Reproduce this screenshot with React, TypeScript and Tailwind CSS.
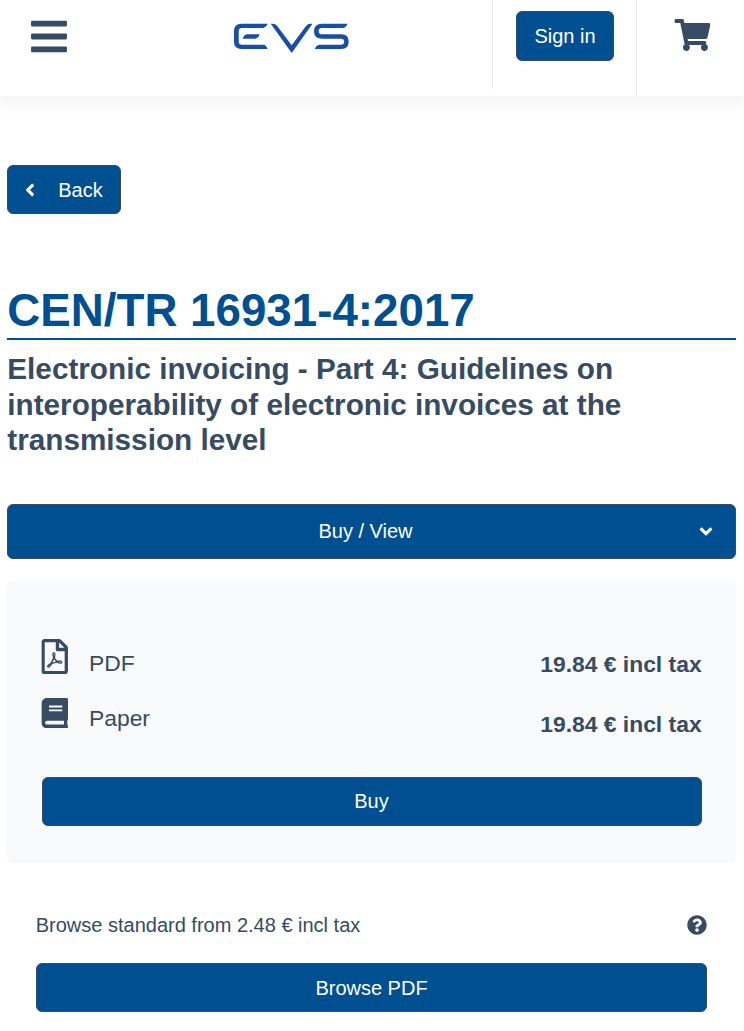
import { ReactNode } from 'react';
import { FaAngleDown, FaAngleLeft, FaBars, FaBook, FaQuestionCircle, FaRegFilePdf, FaShoppingCart } from 'react-icons/fa';

interface ButtonProps {
  children: ReactNode;
  className?: string;
}

function Button({ children, className = '' }: ButtonProps) {
  return (
    <button className={`flex items-center justify-center rounded-md border border-[#374b63] bg-[#004f91] text-xl text-white ${className}`}>
      {children}
    </button>
  );
}

function Logo() {
  return (
    <svg width="117" height="32" viewBox="0 0 117 32" fill="#174ea6" aria-label="EVS">
      <path d="M34.7 1.7H8.5Q1 1.7 1 9V19.7Q1 27 8.5 27H34.7Q34 24.5 31.5 22.7H9Q5.7 22.7 5.7 19.5V9.2Q5.7 6 9 6H30.5Q33.5 5 34.7 1.7Z" />
      <path d="M13.5 12.3H26.7Q26 15.7 22.8 16.7H9.7Q10.5 13.3 13.5 12.3Z" />
      <path d="M37.7 1.7H39.5Q42.5 1.7 44.2 4L58.7 23.3L73 4Q74.8 1.7 77.5 1.7H79.5L58.7 31Z" />
      <path d="M114.5 1.7H89Q81 1.7 81 9.2Q81 16.7 89 16.7H108Q111.2 16.7 111.2 19.7Q111.2 22.7 108 22.7H86.5Q83 23.3 81.8 27H108.3Q115.7 27 115.7 19.7Q115.7 12.3 108.3 12.3H89Q85.6 12.3 85.6 9.2Q85.6 6 89 6H110Q113.5 5.2 114.5 1.7Z" />
    </svg>
  );
}

const formats = [
  { name: 'PDF', price: '19.84 € incl tax' },
  { name: 'Paper', price: '19.84 € incl tax' },
];

export default function App() {
  return (
    <div className="min-h-[1031px] bg-white font-['Liberation_Sans',Arial,sans-serif] text-[#374b63]">
      <header className="flex h-24 items-start bg-white shadow-[0_0_16px_8px_rgba(0,0,0,0.045)]">
        <button className="ml-[31px] mt-4" aria-label="Menu">
          <FaBars className="h-[41px] w-9" />
        </button>
        <div className="ml-[166px] mt-[22px]">
          <Logo />
        </div>
        <div className="ml-[142px] h-[89px] w-36 border-l border-[#e6e8ec] pl-[23px] pt-[11px]">
          <Button className="h-[50px] w-[98px]">Sign in</Button>
        </div>
        <div className="h-24 flex-1 border-l border-[#e6e8ec] pl-[37px] pt-[19px]">
          <FaShoppingCart className="h-8 w-9 translate-x-[0.4px]" />
        </div>
      </header>

      <main className="pl-[7px] pr-2 pt-[69px]">
        <Button className="h-[49px] w-[114px] gap-[18px] pr-[5px]">
          <FaAngleLeft size={20} />
          <span>Back</span>
        </Button>

        <h1 className="mt-[69px] h-[57px] border-b-2 border-[#004f91] pl-[0.3px] text-[45.71px] font-bold leading-[55px] text-[#004f91]">
          CEN/TR 16931-4:2017
        </h1>
        <h2 className="mt-[11px] pl-[0.3px] text-[29.71px] font-bold leading-[35.5px]">
          Electronic invoicing - Part 4: Guidelines on interoperability of electronic invoices at the transmission level
        </h2>

        <Button className="mt-[46.5px] h-[55px] w-full pb-0.5 pl-[27px] pr-[19px]">
          <span className="flex-1">Buy / View</span>
          <FaAngleDown size={20} className="translate-y-[0.5px]" />
        </Button>

        <section className="mt-[22px] h-[280px] rounded-md bg-[#f9fafc] px-[34.4px] pt-[57px] shadow-[0_1px_2px_rgba(0,0,0,0.06)]">
          <div className="flex justify-between text-[22.86px]">
            <div>
              <div className="flex h-[59px] items-start">
                <FaRegFilePdf className="mt-[0.6px] h-[35.4px] w-[26.6px] translate-x-[0.4px]" />
                <span className="ml-[21px] mt-[11px] leading-[28px]">{formats[0].name}</span>
              </div>
              <div className="flex items-start">
                <FaBook className="mt-px h-[30.4px] w-[26.6px] translate-x-[0.4px]" />
                <span className="ml-[21px] mt-[7px] leading-[28px]">{formats[1].name}</span>
              </div>
            </div>
            <div className="flex flex-col gap-8 pt-3 text-right font-bold leading-[28px]">
              {formats.map((format) => (
                <span key={format.name}>{format.price}</span>
              ))}
            </div>
          </div>
          <Button className="ml-[0.6px] mt-[39px] h-[49px] w-[660px] pb-0.5 pr-px">Buy</Button>
        </section>

        <section className="pl-[29px] pr-[29px] pt-[49px] text-xl">
          <div className="flex h-[30px] items-center justify-between">
            <span className="-ml-[0.3px]">Browse standard from 2.48 € incl tax</span>
            <FaQuestionCircle size={20} />
          </div>
          <Button className="mt-[23px] h-[49px] w-full">Browse PDF</Button>
        </section>
      </main>
    </div>
  );
}
